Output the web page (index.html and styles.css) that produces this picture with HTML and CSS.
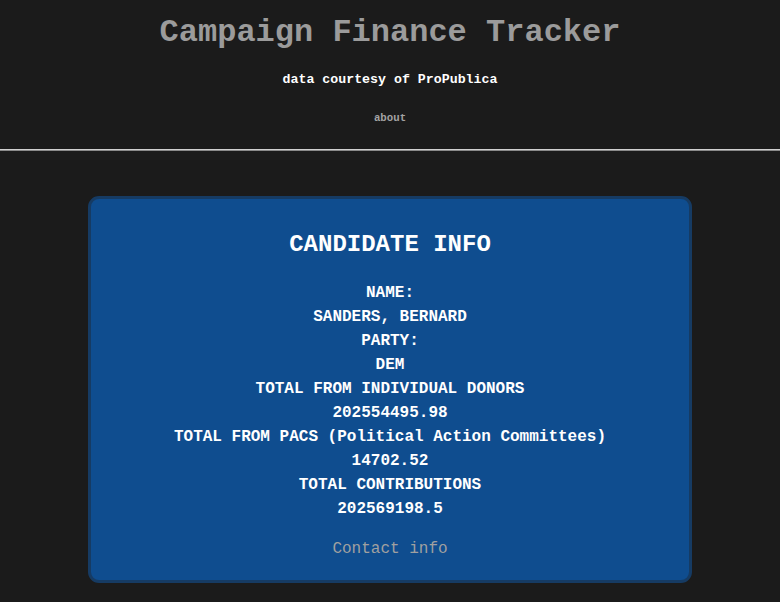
FILE: index.html
```html
<!DOCTYPE html>
<html>
<head>
<meta charset="utf-8">
<link rel="stylesheet" href="styles.css">
</head>
<body>
<header class="header">
  <h1 class="title">Campaign Finance Tracker</h1>
  <h5 class="subtitle">data courtesy of ProPublica</h5>
  <a class="about" href="#">about</a>
</header>
<hr class="rule">
<main class="main">
  <section class="card">
    <h2 class="card-title">CANDIDATE INFO</h2>
    <div class="info">
      <div class="line">NAME:</div>
      <div class="line">SANDERS, BERNARD</div>
      <div class="line">PARTY:</div>
      <div class="line">DEM</div>
      <div class="line">TOTAL FROM INDIVIDUAL DONORS</div>
      <div class="line">202554495.98</div>
      <div class="line">TOTAL FROM PACS (Political Action Committees)</div>
      <div class="line">14702.52</div>
      <div class="line">TOTAL CONTRIBUTIONS</div>
      <div class="line">202569198.5</div>
    </div>
    <a class="contact" href="#">Contact info</a>
  </section>
</main>
</body>
</html>
```
FILE: styles.css
```css
html, body {
  margin: 0;
  padding: 0;
  background: #1b1b1b;
}
body {
  font-family: "Liberation Mono", "Courier New", monospace;
  width: 780px;
  height: 602px;
  overflow: hidden;
}
.header {
  display: flex;
  flex-direction: column;
  align-items: center;
  padding-top: 15px;
}
.title {
  margin: 0;
  font-size: 32px;
  line-height: 36px;
  font-weight: bold;
  color: #9b9b9b;
}
.subtitle {
  margin: 21px 0 0;
  font-size: 13.28px;
  line-height: 16px;
  font-weight: bold;
  color: #ffffff;
}
.about {
  margin-top: 23px;
  font-size: 10.72px;
  line-height: 14px;
  font-weight: bold;
  color: #a3a3a3;
  text-decoration: none;
}
.rule {
  margin: 24px 0 0;
  height: 0;
  border: none;
  border-top: 1px solid #d0d0d0;
  border-bottom: 1px solid #8a8a8a;
}
.main {
  padding-top: 45px;
}
.card {
  box-sizing: border-box;
  width: 604px;
  height: 387px;
  margin: 0 auto;
  background: #0f4d8f;
  border: 3px solid #163b63;
  border-radius: 11px;
  display: flex;
  flex-direction: column;
  align-items: center;
  padding-top: 32px;
}
.card-title {
  margin: 0;
  font-size: 24px;
  line-height: 28px;
  font-weight: bold;
  color: #ffffff;
}
.info {
  margin-top: 22px;
  display: flex;
  flex-direction: column;
  align-items: center;
}
.line {
  font-size: 16px;
  line-height: 24px;
  font-weight: bold;
  color: #ffffff;
}
.contact {
  margin-top: 16px;
  font-size: 16px;
  line-height: 24px;
  color: #a0a0a0;
  text-decoration: none;
}
```
